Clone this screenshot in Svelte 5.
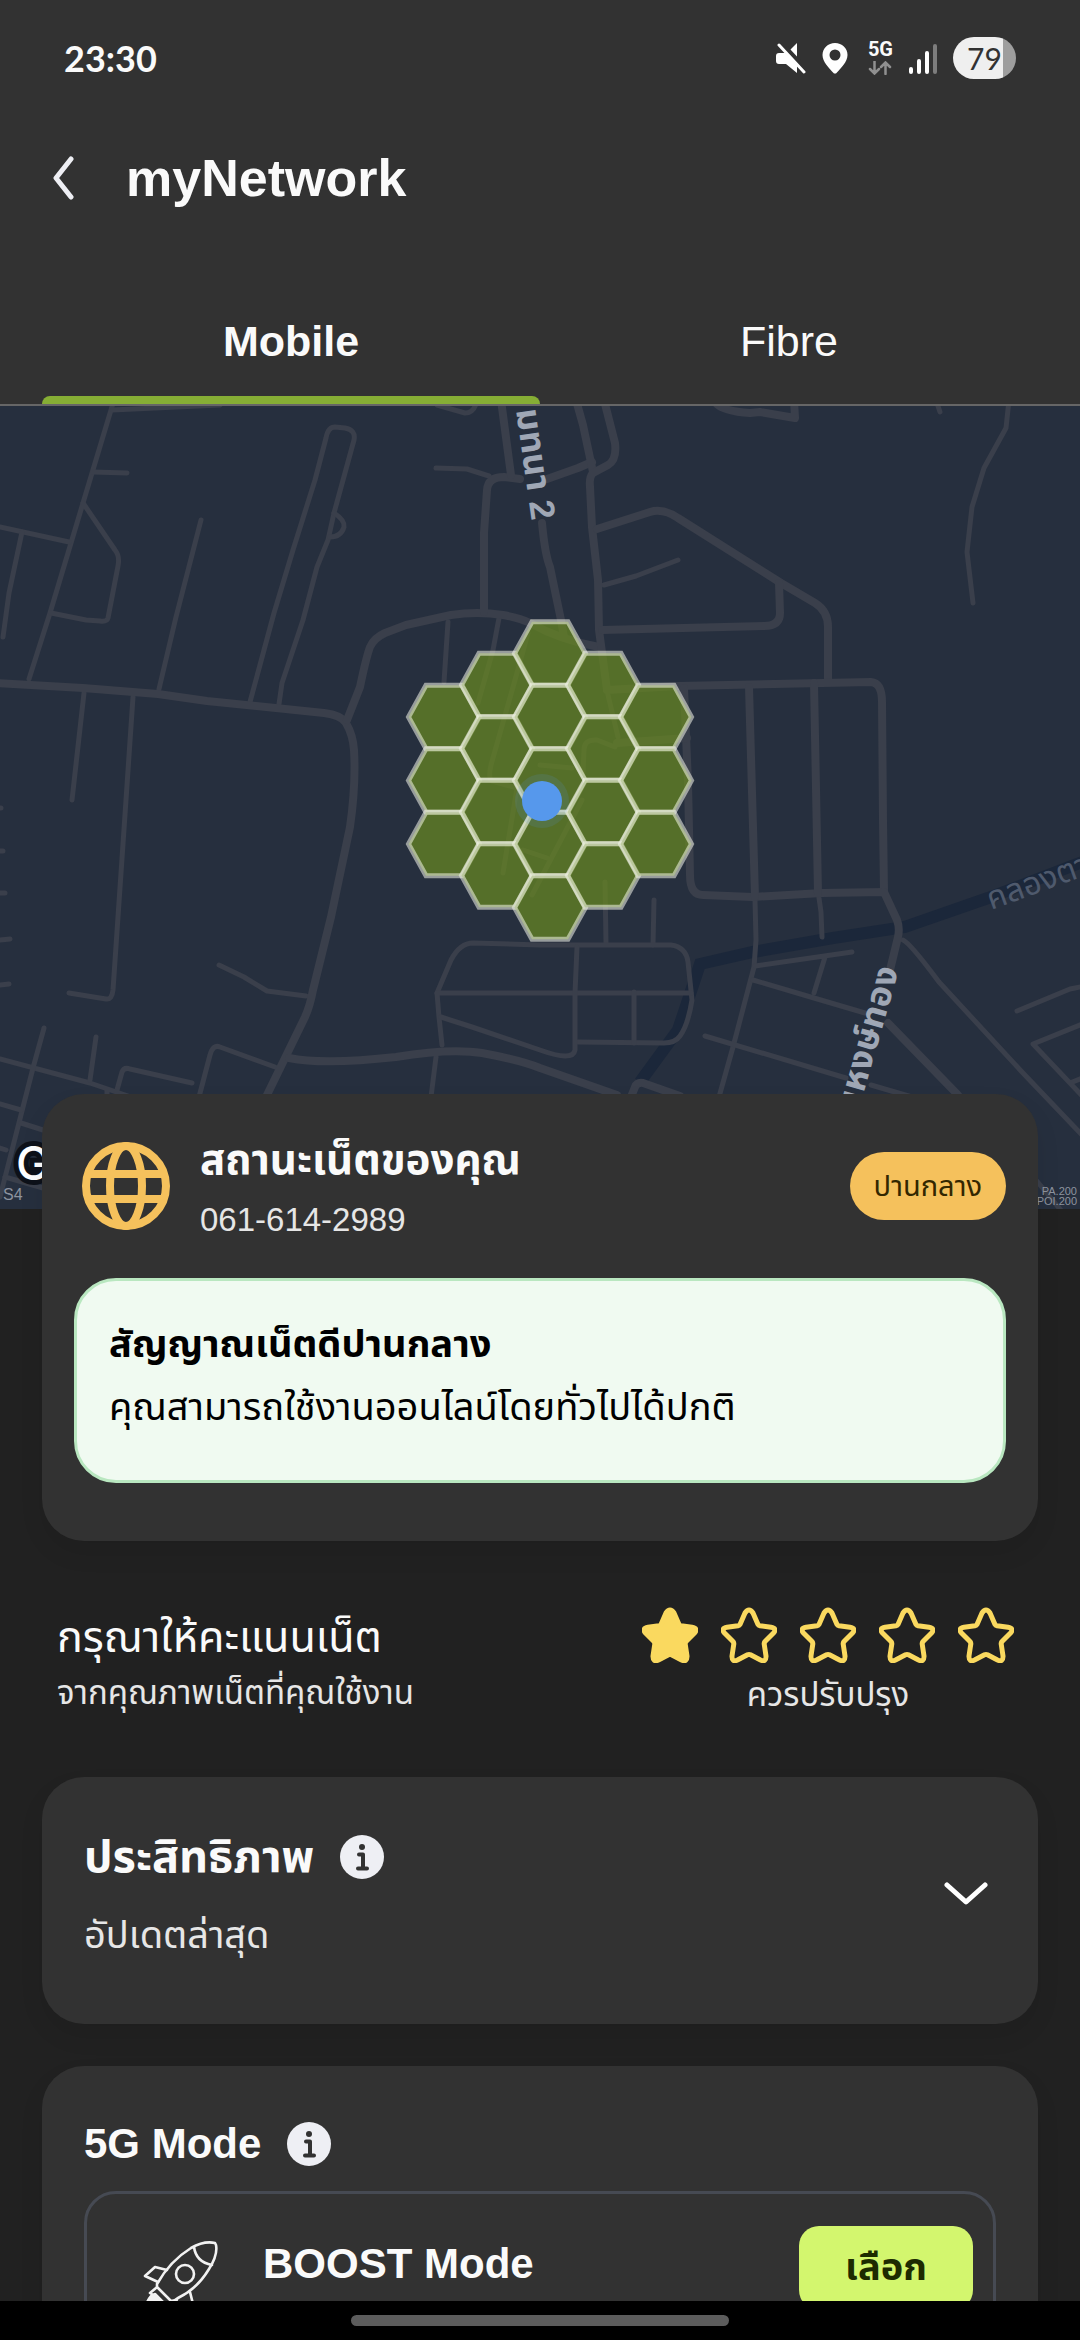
<script lang="ts">
	// State
	let activeTab = $state('Mobile');
	let rating = $state(1);
	let expanded = $state(false);

	const tabs = ['Mobile', 'Fibre'];
	const stars = [1, 2, 3, 4, 5];

	// Coverage cells: one entry per hexagon column
	const columns = [
		{ x: 444, y: 717, count: 3 },
		{ x: 497, y: 685, count: 4 },
		{ x: 550, y: 653.5, count: 5 },
		{ x: 603, y: 685, count: 4 },
		{ x: 656, y: 717, count: 3 }
	];

	const hexagons = columns.flatMap((col) =>
		Array.from({ length: col.count }, (_, i) => hexPoints(col.x, col.y + i * 63.5))
	);

	function hexPoints(x: number, y: number) {
		return [
			[x - 35.5, y],
			[x - 18, y - 31.7],
			[x + 18, y - 31.7],
			[x + 35.5, y],
			[x + 18, y + 31.7],
			[x - 18, y + 31.7]
		]
			.map((p) => p.join(','))
			.join(' ');
	}

	const mainRoads = [
		'M-5 683L83 688L158 694L207 701L324 713Q341 715 346 723Q353 735 354 750Q356 785 350 827L331 917L313 990Q310 1006 305 1017L267 1095L240 1150',
		'M347 720L360 687Q366 658 370 647Q374 638 385 633L406 625L451 615Q477 611 503 615Q520 618 530 623Q560 640 599 647',
		'M484 612V533L487 490Q488 477 504 477L520 479',
		'M547 479L578 468L592 462',
		'M501 400L511 475',
		'M576 400L583 425L593 472',
		'M604 400L615 443Q617 460 608 465L593 473Q589 477 590 487L592 527L598 580L599 630L607 690',
		'M542 523Q545 555 550 567L561 620L564 637',
		'M597 529L650 512Q663 508 678 518L781 583L815 603Q828 611 828 627V682',
		'M779 583L780 613Q780 626 764 626L602 630',
		'M607 690L678 686L871 682Q882 683 882 702L883 820L884 892',
		'M684 688L688 783L690 875Q690 895 703 895L753 897L822 893L884 892L897 920Q900 928 898 937L890 970',
		'M749 687L755 897',
		'M814 683L818 893',
		'M888 1023L958 1095',
		'M289 1058Q324 1065 396 1057Q450 1048 482 1053Q520 1060 540 1068L617 1095',
		'M631 1097L635 1087Q637 1082 643 1083L680 1096',
		'M617 743L687 738',
		'M714 400Q718 411 750 413L760 412L795 418L794 400'
	];

	const sideRoads = [
		'M114 400L83 503L50 613L29 679',
		'M112 410L220 405',
		'M93 472L127 473',
		'M83 503L115 550Q120 556 118 566L108 618Q107 622 100 621L86 620L51 613',
		'M0 527L69 542',
		'M22 532L9 593L3 637',
		'M201 520L176 617L159 689',
		'M250 702L274 613L293 550L315 480L326 438Q328 427 335 427L345 428Q356 430 354 440L334 513L328 540L317 567L303 620L282 683L279 704',
		'M334 513Q345 520 344 527Q341 537 330 537',
		'M436 468L467 469L489 476',
		'M437 405L465 413Q473 413 476 404',
		'M84 693L72 800',
		'M133 697L126 800L113 990Q112 1000 106 999L69 993',
		'M448 622L444 682',
		'M499 618L493 650L478 703',
		'M528 633L515 680L491 765Q488 778 492 781L517 788L503 873',
		'M540 765L572 768',
		'M615 747L597 740Q584 739 584 750L583 773',
		'M582 800L532 895',
		'M523 850L547 858',
		'M608 695L618 737',
		'M604 585L636 576L678 560',
		'M1009 400L1006 428L984 468L972 507L967 552L973 603',
		'M936 400L940 412',
		'M605 882L606 943',
		'M654 900L653 945',
		'M755 900L756 940L754 967L733 1047L719 1097',
		'M819 898L821 912L822 937',
		'M755 966L852 952M825 957L814 993',
		'M753 980L814 998L865 1013',
		'M705 1036L846 1078M871 1085L912 1097',
		'M903 940Q910 943 939 982L1022 1072L1085 1138',
		'M1017 1011L1070 989L1085 986',
		'M1085 1023L1033 1044L1085 1099M1070 1083L1085 1077',
		'M437 993L451 960Q460 943 473 943L540 945L671 945Q686 947 688 962L692 1000Q688 1025 680 1036Q675 1043 664 1043L578 1042',
		'M437 993H691M437 993L439 1017L442 1045',
		'M441 1017L472 1027L540 1050Q573 1062 575 1050L575 993L577 947',
		'M634 992V1043',
		'M436 1057L431 1097',
		'M219 965L244 977L267 991L306 996',
		'M199 1097L210 1055Q213 1044 220 1047L275 1067',
		'M117 1090L122 1072Q124 1067 130 1069L192 1083',
		'M0 1059L90 1083L131 1097M107 1090V1097',
		'M44 1028L33 1068L0 1197',
		'M96 1037L90 1080',
		'M0 1104L21 1110M21 1123L43 1130M0 1148L6 1150M5 1177L43 1188',
		'M0 851H3M0 893H5M0 940L10 939M0 985L9 984M0 808H1',
		'M1036 1180L1064 1214'
	];
</script>

{#snippet infoIcon()}
	<svg viewBox="0 0 44 44" aria-hidden="true">
		<circle cx="22" cy="22" r="22" fill="#eeeff4" />
		<circle cx="22" cy="12" r="3" fill="#323232" />
		<path d="M19 19.500H23V32.500M18 33.500H27" fill="none" stroke="#323232" stroke-width="4" stroke-linecap="round" stroke-linejoin="round" />
	</svg>
{/snippet}

<div class="screen">
	<header class="top">
		<div class="status-bar">
			<span class="clock">23:30</span>
			<div class="status-icons">
				<svg class="mute" viewBox="0 0 30 32" aria-hidden="true">
					<path d="M0 14Q0 11 3 11H9L21 23V31L10 22H3Q0 22 0 19ZM13 9L21 1V16Z" fill="#fff" />
					<path d="M9 6L22 20" stroke="#323232" stroke-width="6" />
					<path d="M3 3L28 30" stroke="#fff" stroke-width="3" stroke-linecap="round" />
				</svg>
				<svg class="pin" viewBox="0 0 26 32" aria-hidden="true">
					<path fill-rule="evenodd" d="M13 1C6 1 0.500 6 0.500 13C0.500 20 7 26 12 31.500H14C19 26 25.500 20 25.500 13C25.500 6 20 1 13 1ZM13 7.500A5.500 5.500 0 1 1 13 18.500A5.500 5.500 0 1 1 13 7.500Z" fill="#fff" />
				</svg>
				<div class="network">
					<span>5G</span>
					<svg viewBox="0 0 24 14" aria-hidden="true">
						<path d="M6.500 0V12M2 8L6.500 12.500L11 8M17.500 13V2M13 6L17.500 1.500L22 6" fill="none" stroke="#909090" stroke-width="2.500" stroke-linecap="round" />
					</svg>
				</div>
				<svg class="signal" viewBox="0 0 28 32" aria-hidden="true">
					<path d="M2 27V30M10 19V30M18 11V30" stroke="#fff" stroke-width="4" stroke-linecap="round" />
					<path d="M26 4V30" stroke="#7d7d7d" stroke-width="4" stroke-linecap="round" />
				</svg>
				<span class="battery">79</span>
			</div>
		</div>

		<div class="title-row">
			<button class="back" aria-label="Back">
				<svg viewBox="0 0 22 44" aria-hidden="true">
					<path d="M19 3L4 22L19 41" fill="none" stroke="#eeeff4" stroke-width="5" stroke-linecap="round" stroke-linejoin="round" />
				</svg>
			</button>
			<h1>myNetwork</h1>
		</div>

		<nav class="tabs">
			{#each tabs as tab}
				<button class="tab" class:active={activeTab === tab} onclick={() => (activeTab = tab)}>{tab}</button>
			{/each}
		</nav>
	</header>

	<main>
		<svg class="map" viewBox="0 406 1080 803" preserveAspectRatio="xMidYMin slice" role="img" aria-label="Map">
			<rect y="400" width="1080" height="820" fill="#262f3e" />
			<path d="M1085 861L988 898L905 927L833 938L753 952L700 964L678 1030L640 1082" fill="none" stroke="#1b273a" stroke-width="12" />
			<g fill="none" stroke="#3a3f4b" stroke-linecap="round" stroke-linejoin="round">
				{#each sideRoads as d}
					<path {d} stroke-width="5" />
				{/each}
				{#each mainRoads as d}
					<path {d} stroke-width="8" />
				{/each}
			</g>
			<g fill="#6a8a21" fill-opacity="0.700" stroke="#f4f5ea" stroke-opacity="0.550" stroke-width="5">
				{#each hexagons as points}
					<polygon {points} />
				{/each}
			</g>
			<circle cx="542" cy="801" r="27" fill="#5698ec" opacity="0.140" />
			<circle cx="542" cy="801" r="20" fill="#5698ec" />

			<text class="road-name" transform="translate(516 410) rotate(82)">มทนา 2</text>
			<text class="road-name" transform="translate(845 1158) rotate(-74)">ถนนหงษ์ทอง</text>
			<text class="canal-name" transform="translate(991 910) rotate(-20)">คลองตาชี</text>
			<text class="google" x="16" y="1180">Google</text>
			<text class="credit" x="3" y="1200">S4</text>
			<text class="credit small" x="1077" y="1195" text-anchor="end">PA.200</text>
			<text class="credit small" x="1077" y="1205" text-anchor="end">POI.200</text>
		</svg>

		<section class="card status-card">
			<div class="status-head">
				<svg class="globe" viewBox="0 0 88 88" fill="none" stroke="#f5c15c" stroke-width="8" aria-hidden="true">
					<circle cx="44" cy="44" r="40" />
					<ellipse cx="44" cy="44" rx="16" ry="40" />
					<path d="M7 32H81M7 57H81" />
				</svg>
				<div class="status-title">
					<h2>สถานะเน็ตของคุณ</h2>
					<span class="phone">061-614-2989</span>
				</div>
				<span class="badge">ปานกลาง</span>
			</div>
			<div class="notice">
				<strong>สัญญาณเน็ตดีปานกลาง</strong>
				<p>คุณสามารถใช้งานออนไลน์โดยทั่วไปได้ปกติ</p>
			</div>
		</section>

		<section class="rating">
			<div class="rating-text">
				<h2>กรุณาให้คะแนนเน็ต</h2>
				<p>จากคุณภาพเน็ตที่คุณใช้งาน</p>
			</div>
			<div class="rating-stars">
				<div class="stars">
					{#each stars as star}
						<button aria-label="{star}" onclick={() => (rating = star)}>
							<svg viewBox="0 0 56 56" aria-hidden="true">
								<path
									d="M24 6Q28 0 32 6L37 17.500Q37.500 18.500 39 18.800L50 20.300Q56.500 21.500 52.500 26L44 34.500Q43 36 43.200 37L45 49Q45.300 55.500 39.500 53L29.500 47.800Q28 47 26.500 47.800L16.500 53Q10.700 55.500 11 49L12.800 37Q13 36 12 34.500L3.500 26Q-0.500 21.500 6 20.300L17 18.800Q18.500 18.500 19 17.500Z"
									fill={star <= rating ? '#fad95f' : 'none'}
									stroke="#fad95f"
									stroke-width="5"
									stroke-linejoin="round"
								/>
							</svg>
						</button>
					{/each}
				</div>
				<p>ควรปรับปรุง</p>
			</div>
		</section>

		<section class="card performance">
			<div>
				<div class="heading">
					<h2>ประสิทธิภาพ</h2>
					<button class="info" aria-label="Info">{@render infoIcon()}</button>
				</div>
				<p class="updated">อัปเดตล่าสุด</p>
			</div>
			<button class="expand" aria-label="Expand" aria-expanded={expanded} onclick={() => (expanded = !expanded)}>
				<svg viewBox="0 0 44 24" aria-hidden="true">
					<path d="M3 3L22 20L41 3" fill="none" stroke="#fff" stroke-width="5" stroke-linecap="round" stroke-linejoin="round" />
				</svg>
			</button>
		</section>

		<section class="card modes">
			<div class="heading">
				<h2>5G Mode</h2>
				<button class="info" aria-label="Info">{@render infoIcon()}</button>
			</div>
			<div class="mode">
				<svg class="rocket" viewBox="0 0 84 84" fill="none" stroke="#f2f2f2" stroke-width="2.600" stroke-linejoin="round" stroke-linecap="round" aria-hidden="true">
					<path d="M74 5C65 3 57 6 50 10Q29 23 16 46V49L30 63Q34 63 37 60Q56 51 68 31Q77 17 75 7Z" />
					<path d="M53 9Q55 24 71 27" />
					<circle cx="44" cy="36" r="9" />
					<path d="M26 32L14 29L4 38L17 44M49 54L52 66L44 76L35 62" />
					<path d="M15 50L9 55L12 57L7 63" />
					<path d="M6 65Q9 57 14 56L26 68Q22 78 5 80Z" fill="#f2f2f2" />
				</svg>
				<h3>BOOST Mode</h3>
				<button class="select">เลือก</button>
			</div>
		</section>
	</main>

	<footer class="nav-bar"><span></span></footer>
</div>

<style>
	:global(body) {
		background: #212121;
	}

	.screen {
		display: flex;
		flex-direction: column;
		height: 100vh;
		overflow: hidden;
		background: #212121;
		color: #fafafa;
		font-family: 'Liberation Sans', 'Noto Sans Thai', 'Noto Sans', sans-serif;
	}

	h1,
	h2,
	h3,
	p {
		margin: 0;
	}

	button {
		padding: 0;
		border: 0;
		background: none;
		color: inherit;
		font: inherit;
		cursor: pointer;
	}

	svg {
		display: block;
	}

	/* Header */
	.top {
		flex: none;
		background: #323232;
		border-bottom: 2px solid #666;
	}

	.status-bar {
		display: flex;
		align-items: center;
		justify-content: space-between;
		height: 116px;
		padding: 0 64px;
	}

	.clock {
		font-family: Lato, sans-serif;
		font-size: 36px;
		font-weight: 700;
	}

	.status-icons {
		display: flex;
		align-items: center;
		gap: 16px;
	}

	.mute {
		width: 30px;
		height: 32px;
	}

	.pin {
		width: 26px;
		height: 32px;
	}

	.network {
		display: flex;
		flex-direction: column;
		align-items: center;
		gap: 4px;
		margin-left: 4px;
		font-family: Roboto, sans-serif;
		font-size: 20px;
		font-weight: 700;
		line-height: 16px;
	}

	.network svg {
		width: 24px;
		height: 14px;
	}

	.signal {
		width: 28px;
		height: 32px;
	}

	.battery {
		width: 63px;
		height: 42px;
		border-radius: 21px;
		background: linear-gradient(90deg, #efefef 79%, #9e9e9e 79%);
		color: #323232;
		font-family: Lato, sans-serif;
		font-size: 30px;
		line-height: 42px;
		text-align: center;
	}

	.title-row {
		display: flex;
		align-items: center;
		gap: 52px;
		height: 124px;
		padding: 0 52px;
	}

	.back svg {
		width: 22px;
		height: 44px;
	}

	h1 {
		font-size: 52px;
		font-weight: 700;
	}

	.tabs {
		display: grid;
		grid-template-columns: 1fr 1fr;
		padding: 38px 42px 0;
	}

	.tab {
		position: relative;
		height: 126px;
		font-size: 43px;
	}

	.tab.active {
		font-weight: 700;
	}

	.tab.active::after {
		content: '';
		position: absolute;
		right: 0;
		bottom: 0;
		left: 0;
		height: 8px;
		border-radius: 8px 8px 0 0;
		background: #86ae35;
	}

	/* Map */
	main {
		flex: 1;
		min-height: 0;
		overflow-y: auto;
		scrollbar-width: none;
	}

	.map {
		width: 100%;
		height: 803px;
	}

	.road-name {
		fill: #9fa7b5;
		font-size: 35px;
		font-weight: 700;
	}

	.canal-name {
		fill: #4f5a6d;
		font-size: 32px;
	}

	.google {
		fill: #fff;
		stroke: #0d1119;
		stroke-width: 10px;
		paint-order: stroke;
		font-family: Inter, sans-serif;
		font-size: 46px;
		font-weight: 500;
	}

	.credit {
		fill: #8d939e;
		font-size: 16px;
	}

	.credit.small {
		font-size: 11px;
	}

	/* Cards */
	.card {
		position: relative;
		margin: 0 42px 42px;
		border-radius: 42px;
		background: #323232;
		box-shadow: 0 12px 24px rgba(0, 0, 0, 0.08);
	}

	.status-card {
		margin-top: -115px;
		padding: 16px 32px 58px;
	}

	.status-head {
		display: flex;
		align-items: center;
		gap: 30px;
		height: 152px;
		margin-bottom: 16px;
		padding-left: 8px;
	}

	.globe {
		width: 88px;
		height: 88px;
	}

	.status-title {
		flex: 1;
	}

	h2 {
		font-size: 42px;
		line-height: 64px;
	}

	.phone {
		display: block;
		margin-top: 4px;
		font-size: 33px;
		line-height: 48px;
		color: #e6e6e6;
	}

	.badge {
		padding: 0 24px;
		border-radius: 34px;
		background: #f5c15c;
		color: #332700;
		font-size: 29px;
		line-height: 68px;
	}

	.notice {
		padding: 32px 32px 41px;
		border: 3px solid #b9e7c0;
		border-radius: 42px;
		background: #f0faf1;
		color: #000;
		font-size: 38px;
		line-height: 63px;
	}

	.notice strong {
		display: block;
	}

	/* Rating */
	.rating {
		display: flex;
		justify-content: space-between;
		margin: 66px 66px 56px 57px;
	}

	.rating h2 {
		font-size: 43px;
		font-weight: 400;
		line-height: 60px;
	}

	.rating p {
		font-size: 33px;
		line-height: 52px;
		color: #e6e6e6;
	}

	.rating-stars {
		text-align: center;
	}

	.stars {
		display: flex;
		gap: 23px;
		margin-bottom: 6px;
	}

	.stars svg {
		width: 56px;
		height: 56px;
	}

	/* Performance */
	.performance {
		display: flex;
		align-items: center;
		justify-content: space-between;
		padding: 48px 50px 61px 42px;
	}

	.performance h2 {
		font-size: 45px;
	}

	.heading {
		display: flex;
		align-items: center;
		gap: 26px;
	}

	.info svg {
		width: 44px;
		height: 44px;
	}

	.updated {
		margin-top: 18px;
		font-size: 38px;
		line-height: 56px;
		color: #e6e6e6;
	}

	.expand svg {
		width: 44px;
		height: 24px;
	}

	/* Modes */
	.modes {
		padding: 46px 42px;
	}

	.mode {
		display: flex;
		align-items: flex-start;
		margin-top: 15px;
		padding: 32px 20px 40px 54px;
		border: 3px solid #464a53;
		border-radius: 32px;
	}

	.rocket {
		width: 84px;
		height: 84px;
		margin-top: 12px;
	}

	h3 {
		flex: 1;
		margin-left: 38px;
		font-size: 42px;
		line-height: 76px;
	}

	.select {
		width: 174px;
		height: 84px;
		border-radius: 20px;
		background: #d3f66e;
		color: #1d2b00;
		font-size: 38px;
		font-weight: 700;
	}

	/* System navigation bar */
	.nav-bar {
		display: flex;
		flex: none;
		align-items: center;
		justify-content: center;
		height: 39px;
		background: #000;
	}

	.nav-bar span {
		width: 35%;
		height: 11px;
		border-radius: 6px;
		background: #5c5c5c;
	}
</style>
